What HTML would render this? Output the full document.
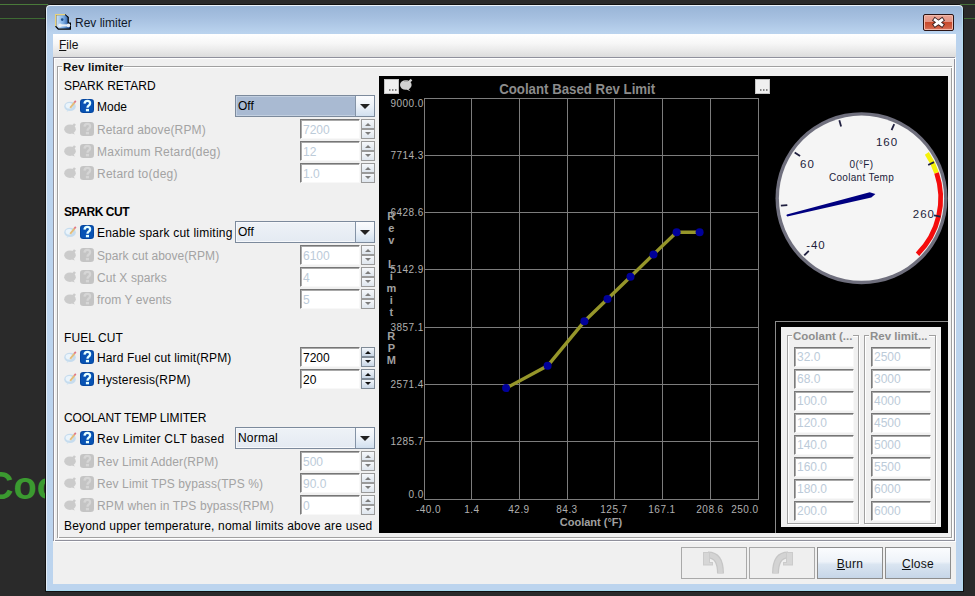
<!DOCTYPE html>
<html><head><meta charset="utf-8">
<style>
*{box-sizing:border-box;margin:0;padding:0}
html,body{width:975px;height:596px;overflow:hidden;background:#2a2a2a;font-family:"Liberation Sans",sans-serif;font-size:12px;color:#000}
.a{position:absolute}
.t{position:absolute;white-space:nowrap;line-height:14px}
.dis{color:#a3a3a3}
.tf{position:absolute;background:#fff;border-top:1px solid #767676;border-left:1px solid #7c7c7c;border-right:1px solid #f8f8f8;border-bottom:1px solid #f8f8f8;box-shadow:inset 1px 1px 0 #a9a9a9;font-size:12px;line-height:16px;padding-left:2px;padding-top:2px;color:#000;white-space:nowrap;overflow:hidden}
.tf.d{color:#bccbd9}
.sb{position:absolute;width:14px;height:10px;border:1px solid #9a9a9a;background:linear-gradient(#f6f8fb,#dfe6ee)}
.sb.e{border-color:#7f8a96;background:linear-gradient(#f2f6fb,#c9d7e7)}
.sb i{position:absolute;left:3px;width:0;height:0;border-left:3px solid transparent;border-right:3px solid transparent}
.sb i.up{top:3px;border-bottom:3px solid #7c7c7c}
.sb i.dn{top:2px;border-top:3px solid #7c7c7c}
.sb.e i.up{border-bottom-color:#111}
.sb.e i.dn{border-top-color:#111}
.combo{position:absolute;border:1px solid #7c8a9c;background:linear-gradient(#eef2f7,#e4eaf2);height:22px;width:140px;box-shadow:inset 0 0 0 1px #f6f8fb}
.combo.f{background:#a9bad2;box-shadow:inset 0 0 0 1px #c2cfe0}
.combo .v{position:absolute;left:2px;top:3px;line-height:14px}
.combo .btn{position:absolute;right:0;top:0;width:19px;height:20px;border-left:1px solid #8493a6;background:linear-gradient(#fbfcfe,#eef3f9 45%,#d2e0ef)}
.combo .btn i{position:absolute;left:4px;top:8px;width:0;height:0;border-left:5px solid transparent;border-right:5px solid transparent;border-top:5px solid #222}
.etch{border:1px solid #a0a0a0;box-shadow:1px 1px 0 #fff, inset 1px 1px 0 #fff}
.gtitle{font-weight:bold;font-size:11.5px;color:#8e8e8e;background:#f0f0f0;padding:0 1px}
.btnw{position:absolute;width:66px;height:32px;border:1px solid #8d8d8d;background:linear-gradient(#fbfcfe 0,#eef3f9 45%,#dae5f1 55%,#c6d6e8 100%);text-align:center;line-height:32px;font-size:12px;color:#111;letter-spacing:0.3px}
.btnw.d{background:#efefef;border-color:#a9a9a9}
svg text{font-family:"Liberation Sans",sans-serif}
.ax{font-size:10px;fill:#b0b0b0;letter-spacing:0.45px}
.ttl{font-size:14px;font-weight:bold;fill:#8c8c8c}
.xt{font-size:11px;font-weight:bold;fill:#a0a0a0}
.yt{font-size:11px;font-weight:bold;fill:#a0a0a0}
.gl{font-size:11.5px;fill:#1c1c3a;letter-spacing:0.9px}
.gt{font-size:10px;fill:#1c1c3a;letter-spacing:0.3px}
</style></head>
<body>
<!-- background decorations -->
<div class="a" style="left:0;top:4px;width:48px;height:1px;background:#4a7a3a"></div>
<div class="a" style="left:0;top:18px;width:46px;height:1px;background:#3e6a33"></div>
<div class="a" style="left:960px;top:4px;width:15px;height:1px;background:#44703a"></div>
<div class="a" style="left:963px;top:18px;width:12px;height:1px;background:#3e6a33"></div>
<div class="t" style="left:-14px;top:464px;font-size:38px;line-height:44px;font-weight:bold;color:#3b9a30">Coo</div>

<!-- window -->
<div class="a" style="left:45px;top:4px;width:919px;height:588px;background:#111;border-radius:7px 7px 0 0"></div>
<div class="a" style="left:46px;top:5px;width:917px;height:586px;border-radius:4px 4px 0 0;background:linear-gradient(#f4f8fc 0,#e4edf7 1px,#e4edf7 100%)"></div>
<div class="a" style="left:47px;top:6px;width:915px;height:584px;border-radius:3px 3px 0 0;background:linear-gradient(#99b5d7 0,#a6c0e0 12px,#bad3ee 27px,#bcd4ee 100%)"></div>

<div class="a" style="left:962px;top:8px;width:1px;height:583px;background:#b4dcef"></div>
<div class="a" style="left:46px;top:590px;width:917px;height:1px;background:#a9dbef"></div>
<!-- title -->
<div class="a" style="left:55px;top:14px;width:17px;height:17px">
<svg width="17" height="17"><defs><linearGradient id="ib" x1="0" y1="0" x2="1" y2="0"><stop offset="0" stop-color="#cfe4f8"/><stop offset="0.5" stop-color="#7fb0e6"/><stop offset="1" stop-color="#1d4f9a"/></linearGradient></defs>
<path d="M10 0 L13.8 3 L13.8 8.6 L16 8.6 L16 15.8 L3 15.8 L0 12.6 L1 1 Z" fill="#000"/>
<path d="M1.3 1.3 L10 1 L12.6 3.6 L12.6 9.6 L14.8 9.6 L14.8 14.4 L3.6 14.4 L1.3 12 Z" fill="url(#ib)"/>
<path d="M0.6 12.2 V0.6 H10" fill="none" stroke="#e8d27a" stroke-width="1.2"/>
<circle cx="7.2" cy="5.6" r="1.3" fill="#1e4f8c"/>
<path d="M5 11.4 H13.5" stroke="#e8eef4" stroke-width="2.2"/><circle cx="5" cy="11.4" r="1.8" fill="#e8eef4"/><circle cx="13.5" cy="11.4" r="1.8" fill="#e8eef4"/>
</svg>
</div>
<div class="t" style="left:75px;top:16px;font-size:12px;color:#101828">Rev limiter</div>
<!-- close button -->
<div class="a" style="left:923px;top:14px;width:31px;height:17px;border:1px solid #2c1414;border-radius:2px;box-shadow:inset 0 0 0 1px #f2b9aa;background:linear-gradient(#eba595 0,#e39383 46%,#c84a2c 50%,#cf5c40 80%,#dc7a66 100%)"></div>
<svg class="a" style="left:930px;top:16px" width="17" height="13"><path d="M5.2 4 L11.8 8.8 M11.8 4 L5.2 8.8" stroke="#3a2020" stroke-width="4.6" stroke-linecap="square"/><path d="M5.2 4 L11.8 8.8 M11.8 4 L5.2 8.8" stroke="#fff" stroke-width="2.8" stroke-linecap="square"/></svg>

<!-- client -->
<div class="a" style="left:53px;top:34px;width:903px;height:550px;background:#f0f0f0"></div>
<!-- menubar -->
<div class="a" style="left:53px;top:34px;width:903px;height:23px;background:linear-gradient(#ffffff,#f7f7f7 40%,#e8e8e8 75%,#dcdcdc)"></div>
<div class="t" style="left:59px;top:38px;color:#111"><u>F</u>ile</div>

<!-- outer panel etched -->
<div class="a" style="left:53px;top:57px;width:902px;height:484px;border:1px solid #8f909c"></div>
<div class="a" style="left:54px;top:58px;width:902px;height:484px;border:1px solid #fff;border-left-color:#fff"></div>
<!-- groupbox etched -->
<div class="a" style="left:57px;top:66px;width:895px;height:472px;border:1px solid #a0a0a0"></div>
<div class="a" style="left:58px;top:67px;width:895px;height:472px;border:1px solid #fff"></div>
<div class="t" style="left:62px;top:60px;font-weight:bold;font-size:11.5px;background:#f0f0f0;padding:0 1px;color:#111;letter-spacing:0.15px">Rev limiter</div>

<div class="t" style="left:64px;top:79px">SPARK RETARD</div>
<div class="a" style="left:64px;top:100px;width:13px;height:12px"><svg width="13" height="12"><ellipse cx="6" cy="6.4" rx="5.8" ry="4.7" fill="#c6dcee"/><ellipse cx="5.2" cy="5.8" rx="3.6" ry="2.8" fill="#eaf4fb"/><path d="M3.5 10 L2.6 11.8 L6 10.6Z" fill="#cfe2f0"/><path d="M6.2 7.8 L10.6 2.4" stroke="#e4bc78" stroke-width="1.9"/><path d="M10.3 2.6 L11.8 0.9" stroke="#e07886" stroke-width="1.7"/></svg></div>
<div class="a" style="left:80px;top:99px;width:14px;height:14px"><svg width="14" height="14"><rect width="14" height="14" rx="3.2" fill="#04469f"/><rect x="1" y="1" width="12" height="12" rx="2.5" fill="#0853b4"/><path d="M4.5 4.7 Q4.7 1.9 7.4 1.9 Q10.1 1.9 10.1 4.3 Q10.1 5.8 8.5 6.8 Q7.5 7.4 7.5 8.8" fill="none" stroke="#e6ffff" stroke-width="2.3"/><rect x="5.9" y="9.9" width="3.1" height="2.4" fill="#e6ffff"/></svg></div>
<div class="t" style="left:97px;top:100px">Mode</div>
<div class="combo f" style="left:235px;top:95px"><div class="v">Off</div><div class="btn"><i></i></div></div>
<div class="a" style="left:64px;top:123px;width:13px;height:12px"><svg width="13" height="12"><ellipse cx="6" cy="6.2" rx="5.8" ry="4.8" fill="#cbcbcb"/><path d="M8 4.5 L11 1" stroke="#cbcbcb" stroke-width="2.6"/><path d="M9 9 L11 11.5 L8 10.5Z" fill="#cbcbcb"/></svg></div>
<div class="a" style="left:80px;top:122px;width:14px;height:14px"><svg width="14" height="14"><rect width="14" height="14" rx="3.2" fill="#c4c4c4"/><path d="M4.5 4.7 Q4.7 1.9 7.4 1.9 Q10.1 1.9 10.1 4.3 Q10.1 5.8 8.5 6.8 Q7.5 7.4 7.5 8.8" fill="none" stroke="#d6d6d6" stroke-width="2.3"/><rect x="5.9" y="9.9" width="3.1" height="2.4" fill="#d6d6d6"/></svg></div>
<div class="t dis" style="left:97px;top:123px;letter-spacing:0.12px">Retard above(RPM)</div>
<div class="tf d" style="left:300px;top:119px;width:60px;height:20px">7200</div>
<div class="sb" style="left:361px;top:119px"><i class="up"></i></div>
<div class="sb" style="left:361px;top:129px"><i class="dn"></i></div>
<div class="a" style="left:64px;top:145px;width:13px;height:12px"><svg width="13" height="12"><ellipse cx="6" cy="6.2" rx="5.8" ry="4.8" fill="#cbcbcb"/><path d="M8 4.5 L11 1" stroke="#cbcbcb" stroke-width="2.6"/><path d="M9 9 L11 11.5 L8 10.5Z" fill="#cbcbcb"/></svg></div>
<div class="a" style="left:80px;top:144px;width:14px;height:14px"><svg width="14" height="14"><rect width="14" height="14" rx="3.2" fill="#c4c4c4"/><path d="M4.5 4.7 Q4.7 1.9 7.4 1.9 Q10.1 1.9 10.1 4.3 Q10.1 5.8 8.5 6.8 Q7.5 7.4 7.5 8.8" fill="none" stroke="#d6d6d6" stroke-width="2.3"/><rect x="5.9" y="9.9" width="3.1" height="2.4" fill="#d6d6d6"/></svg></div>
<div class="t dis" style="left:97px;top:145px;letter-spacing:0.23px">Maximum Retard(deg)</div>
<div class="tf d" style="left:300px;top:141px;width:60px;height:20px">12</div>
<div class="sb" style="left:361px;top:141px"><i class="up"></i></div>
<div class="sb" style="left:361px;top:151px"><i class="dn"></i></div>
<div class="a" style="left:64px;top:167px;width:13px;height:12px"><svg width="13" height="12"><ellipse cx="6" cy="6.2" rx="5.8" ry="4.8" fill="#cbcbcb"/><path d="M8 4.5 L11 1" stroke="#cbcbcb" stroke-width="2.6"/><path d="M9 9 L11 11.5 L8 10.5Z" fill="#cbcbcb"/></svg></div>
<div class="a" style="left:80px;top:166px;width:14px;height:14px"><svg width="14" height="14"><rect width="14" height="14" rx="3.2" fill="#c4c4c4"/><path d="M4.5 4.7 Q4.7 1.9 7.4 1.9 Q10.1 1.9 10.1 4.3 Q10.1 5.8 8.5 6.8 Q7.5 7.4 7.5 8.8" fill="none" stroke="#d6d6d6" stroke-width="2.3"/><rect x="5.9" y="9.9" width="3.1" height="2.4" fill="#d6d6d6"/></svg></div>
<div class="t dis" style="left:97px;top:167px;letter-spacing:0.24px">Retard to(deg)</div>
<div class="tf d" style="left:300px;top:163px;width:60px;height:20px">1.0</div>
<div class="sb" style="left:361px;top:163px"><i class="up"></i></div>
<div class="sb" style="left:361px;top:173px"><i class="dn"></i></div>
<div class="t" style="left:64px;top:205px;font-weight:bold;letter-spacing:-0.45px">SPARK CUT</div>
<div class="a" style="left:64px;top:226px;width:13px;height:12px"><svg width="13" height="12"><ellipse cx="6" cy="6.4" rx="5.8" ry="4.7" fill="#c6dcee"/><ellipse cx="5.2" cy="5.8" rx="3.6" ry="2.8" fill="#eaf4fb"/><path d="M3.5 10 L2.6 11.8 L6 10.6Z" fill="#cfe2f0"/><path d="M6.2 7.8 L10.6 2.4" stroke="#e4bc78" stroke-width="1.9"/><path d="M10.3 2.6 L11.8 0.9" stroke="#e07886" stroke-width="1.7"/></svg></div>
<div class="a" style="left:80px;top:225px;width:14px;height:14px"><svg width="14" height="14"><rect width="14" height="14" rx="3.2" fill="#04469f"/><rect x="1" y="1" width="12" height="12" rx="2.5" fill="#0853b4"/><path d="M4.5 4.7 Q4.7 1.9 7.4 1.9 Q10.1 1.9 10.1 4.3 Q10.1 5.8 8.5 6.8 Q7.5 7.4 7.5 8.8" fill="none" stroke="#e6ffff" stroke-width="2.3"/><rect x="5.9" y="9.9" width="3.1" height="2.4" fill="#e6ffff"/></svg></div>
<div class="t" style="left:97px;top:226px;letter-spacing:0.22px">Enable spark cut limiting</div>
<div class="combo" style="left:235px;top:221px"><div class="v">Off</div><div class="btn"><i></i></div></div>
<div class="a" style="left:64px;top:249px;width:13px;height:12px"><svg width="13" height="12"><ellipse cx="6" cy="6.2" rx="5.8" ry="4.8" fill="#cbcbcb"/><path d="M8 4.5 L11 1" stroke="#cbcbcb" stroke-width="2.6"/><path d="M9 9 L11 11.5 L8 10.5Z" fill="#cbcbcb"/></svg></div>
<div class="a" style="left:80px;top:248px;width:14px;height:14px"><svg width="14" height="14"><rect width="14" height="14" rx="3.2" fill="#c4c4c4"/><path d="M4.5 4.7 Q4.7 1.9 7.4 1.9 Q10.1 1.9 10.1 4.3 Q10.1 5.8 8.5 6.8 Q7.5 7.4 7.5 8.8" fill="none" stroke="#d6d6d6" stroke-width="2.3"/><rect x="5.9" y="9.9" width="3.1" height="2.4" fill="#d6d6d6"/></svg></div>
<div class="t dis" style="left:97px;top:249px;letter-spacing:0.04px">Spark cut above(RPM)</div>
<div class="tf d" style="left:300px;top:245px;width:60px;height:20px">6100</div>
<div class="sb" style="left:361px;top:245px"><i class="up"></i></div>
<div class="sb" style="left:361px;top:255px"><i class="dn"></i></div>
<div class="a" style="left:64px;top:271px;width:13px;height:12px"><svg width="13" height="12"><ellipse cx="6" cy="6.2" rx="5.8" ry="4.8" fill="#cbcbcb"/><path d="M8 4.5 L11 1" stroke="#cbcbcb" stroke-width="2.6"/><path d="M9 9 L11 11.5 L8 10.5Z" fill="#cbcbcb"/></svg></div>
<div class="a" style="left:80px;top:270px;width:14px;height:14px"><svg width="14" height="14"><rect width="14" height="14" rx="3.2" fill="#c4c4c4"/><path d="M4.5 4.7 Q4.7 1.9 7.4 1.9 Q10.1 1.9 10.1 4.3 Q10.1 5.8 8.5 6.8 Q7.5 7.4 7.5 8.8" fill="none" stroke="#d6d6d6" stroke-width="2.3"/><rect x="5.9" y="9.9" width="3.1" height="2.4" fill="#d6d6d6"/></svg></div>
<div class="t dis" style="left:97px;top:271px;letter-spacing:0.09px">Cut X sparks</div>
<div class="tf d" style="left:300px;top:267px;width:60px;height:20px">4</div>
<div class="sb" style="left:361px;top:267px"><i class="up"></i></div>
<div class="sb" style="left:361px;top:277px"><i class="dn"></i></div>
<div class="a" style="left:64px;top:293px;width:13px;height:12px"><svg width="13" height="12"><ellipse cx="6" cy="6.2" rx="5.8" ry="4.8" fill="#cbcbcb"/><path d="M8 4.5 L11 1" stroke="#cbcbcb" stroke-width="2.6"/><path d="M9 9 L11 11.5 L8 10.5Z" fill="#cbcbcb"/></svg></div>
<div class="a" style="left:80px;top:292px;width:14px;height:14px"><svg width="14" height="14"><rect width="14" height="14" rx="3.2" fill="#c4c4c4"/><path d="M4.5 4.7 Q4.7 1.9 7.4 1.9 Q10.1 1.9 10.1 4.3 Q10.1 5.8 8.5 6.8 Q7.5 7.4 7.5 8.8" fill="none" stroke="#d6d6d6" stroke-width="2.3"/><rect x="5.9" y="9.9" width="3.1" height="2.4" fill="#d6d6d6"/></svg></div>
<div class="t dis" style="left:97px;top:293px;letter-spacing:0.08px">from Y events</div>
<div class="tf d" style="left:300px;top:289px;width:60px;height:20px">5</div>
<div class="sb" style="left:361px;top:289px"><i class="up"></i></div>
<div class="sb" style="left:361px;top:299px"><i class="dn"></i></div>
<div class="t" style="left:64px;top:331px;letter-spacing:0.09px">FUEL CUT</div>
<div class="a" style="left:64px;top:351px;width:13px;height:12px"><svg width="13" height="12"><ellipse cx="6" cy="6.4" rx="5.8" ry="4.7" fill="#c6dcee"/><ellipse cx="5.2" cy="5.8" rx="3.6" ry="2.8" fill="#eaf4fb"/><path d="M3.5 10 L2.6 11.8 L6 10.6Z" fill="#cfe2f0"/><path d="M6.2 7.8 L10.6 2.4" stroke="#e4bc78" stroke-width="1.9"/><path d="M10.3 2.6 L11.8 0.9" stroke="#e07886" stroke-width="1.7"/></svg></div>
<div class="a" style="left:80px;top:350px;width:14px;height:14px"><svg width="14" height="14"><rect width="14" height="14" rx="3.2" fill="#04469f"/><rect x="1" y="1" width="12" height="12" rx="2.5" fill="#0853b4"/><path d="M4.5 4.7 Q4.7 1.9 7.4 1.9 Q10.1 1.9 10.1 4.3 Q10.1 5.8 8.5 6.8 Q7.5 7.4 7.5 8.8" fill="none" stroke="#e6ffff" stroke-width="2.3"/><rect x="5.9" y="9.9" width="3.1" height="2.4" fill="#e6ffff"/></svg></div>
<div class="t" style="left:97px;top:351px;letter-spacing:0.13px">Hard Fuel cut limit(RPM)</div>
<div class="tf" style="left:300px;top:347px;width:60px;height:20px">7200</div>
<div class="sb e" style="left:361px;top:347px"><i class="up"></i></div>
<div class="sb e" style="left:361px;top:357px"><i class="dn"></i></div>
<div class="a" style="left:64px;top:373px;width:13px;height:12px"><svg width="13" height="12"><ellipse cx="6" cy="6.4" rx="5.8" ry="4.7" fill="#c6dcee"/><ellipse cx="5.2" cy="5.8" rx="3.6" ry="2.8" fill="#eaf4fb"/><path d="M3.5 10 L2.6 11.8 L6 10.6Z" fill="#cfe2f0"/><path d="M6.2 7.8 L10.6 2.4" stroke="#e4bc78" stroke-width="1.9"/><path d="M10.3 2.6 L11.8 0.9" stroke="#e07886" stroke-width="1.7"/></svg></div>
<div class="a" style="left:80px;top:372px;width:14px;height:14px"><svg width="14" height="14"><rect width="14" height="14" rx="3.2" fill="#04469f"/><rect x="1" y="1" width="12" height="12" rx="2.5" fill="#0853b4"/><path d="M4.5 4.7 Q4.7 1.9 7.4 1.9 Q10.1 1.9 10.1 4.3 Q10.1 5.8 8.5 6.8 Q7.5 7.4 7.5 8.8" fill="none" stroke="#e6ffff" stroke-width="2.3"/><rect x="5.9" y="9.9" width="3.1" height="2.4" fill="#e6ffff"/></svg></div>
<div class="t" style="left:97px;top:373px;letter-spacing:0.21px">Hysteresis(RPM)</div>
<div class="tf" style="left:300px;top:369px;width:60px;height:20px">20</div>
<div class="sb e" style="left:361px;top:369px"><i class="up"></i></div>
<div class="sb e" style="left:361px;top:379px"><i class="dn"></i></div>
<div class="t" style="left:64px;top:411px;letter-spacing:-0.12px">COOLANT TEMP LIMITER</div>
<div class="a" style="left:64px;top:432px;width:13px;height:12px"><svg width="13" height="12"><ellipse cx="6" cy="6.4" rx="5.8" ry="4.7" fill="#c6dcee"/><ellipse cx="5.2" cy="5.8" rx="3.6" ry="2.8" fill="#eaf4fb"/><path d="M3.5 10 L2.6 11.8 L6 10.6Z" fill="#cfe2f0"/><path d="M6.2 7.8 L10.6 2.4" stroke="#e4bc78" stroke-width="1.9"/><path d="M10.3 2.6 L11.8 0.9" stroke="#e07886" stroke-width="1.7"/></svg></div>
<div class="a" style="left:80px;top:431px;width:14px;height:14px"><svg width="14" height="14"><rect width="14" height="14" rx="3.2" fill="#04469f"/><rect x="1" y="1" width="12" height="12" rx="2.5" fill="#0853b4"/><path d="M4.5 4.7 Q4.7 1.9 7.4 1.9 Q10.1 1.9 10.1 4.3 Q10.1 5.8 8.5 6.8 Q7.5 7.4 7.5 8.8" fill="none" stroke="#e6ffff" stroke-width="2.3"/><rect x="5.9" y="9.9" width="3.1" height="2.4" fill="#e6ffff"/></svg></div>
<div class="t" style="left:97px;top:432px;letter-spacing:0.28px">Rev Limiter CLT based</div>
<div class="combo" style="left:235px;top:427px"><div class="v" style="letter-spacing:0.2px">Normal</div><div class="btn"><i></i></div></div>
<div class="a" style="left:64px;top:455px;width:13px;height:12px"><svg width="13" height="12"><ellipse cx="6" cy="6.2" rx="5.8" ry="4.8" fill="#cbcbcb"/><path d="M8 4.5 L11 1" stroke="#cbcbcb" stroke-width="2.6"/><path d="M9 9 L11 11.5 L8 10.5Z" fill="#cbcbcb"/></svg></div>
<div class="a" style="left:80px;top:454px;width:14px;height:14px"><svg width="14" height="14"><rect width="14" height="14" rx="3.2" fill="#c4c4c4"/><path d="M4.5 4.7 Q4.7 1.9 7.4 1.9 Q10.1 1.9 10.1 4.3 Q10.1 5.8 8.5 6.8 Q7.5 7.4 7.5 8.8" fill="none" stroke="#d6d6d6" stroke-width="2.3"/><rect x="5.9" y="9.9" width="3.1" height="2.4" fill="#d6d6d6"/></svg></div>
<div class="t dis" style="left:97px;top:455px;letter-spacing:0.1px">Rev Limit Adder(RPM)</div>
<div class="tf d" style="left:300px;top:451px;width:60px;height:20px">500</div>
<div class="sb" style="left:361px;top:451px"><i class="up"></i></div>
<div class="sb" style="left:361px;top:461px"><i class="dn"></i></div>
<div class="a" style="left:64px;top:477px;width:13px;height:12px"><svg width="13" height="12"><ellipse cx="6" cy="6.2" rx="5.8" ry="4.8" fill="#cbcbcb"/><path d="M8 4.5 L11 1" stroke="#cbcbcb" stroke-width="2.6"/><path d="M9 9 L11 11.5 L8 10.5Z" fill="#cbcbcb"/></svg></div>
<div class="a" style="left:80px;top:476px;width:14px;height:14px"><svg width="14" height="14"><rect width="14" height="14" rx="3.2" fill="#c4c4c4"/><path d="M4.5 4.7 Q4.7 1.9 7.4 1.9 Q10.1 1.9 10.1 4.3 Q10.1 5.8 8.5 6.8 Q7.5 7.4 7.5 8.8" fill="none" stroke="#d6d6d6" stroke-width="2.3"/><rect x="5.9" y="9.9" width="3.1" height="2.4" fill="#d6d6d6"/></svg></div>
<div class="t dis" style="left:97px;top:477px;letter-spacing:0.11px">Rev Limit TPS bypass(TPS %)</div>
<div class="tf d" style="left:300px;top:473px;width:60px;height:20px">90.0</div>
<div class="sb" style="left:361px;top:473px"><i class="up"></i></div>
<div class="sb" style="left:361px;top:483px"><i class="dn"></i></div>
<div class="a" style="left:64px;top:499px;width:13px;height:12px"><svg width="13" height="12"><ellipse cx="6" cy="6.2" rx="5.8" ry="4.8" fill="#cbcbcb"/><path d="M8 4.5 L11 1" stroke="#cbcbcb" stroke-width="2.6"/><path d="M9 9 L11 11.5 L8 10.5Z" fill="#cbcbcb"/></svg></div>
<div class="a" style="left:80px;top:498px;width:14px;height:14px"><svg width="14" height="14"><rect width="14" height="14" rx="3.2" fill="#c4c4c4"/><path d="M4.5 4.7 Q4.7 1.9 7.4 1.9 Q10.1 1.9 10.1 4.3 Q10.1 5.8 8.5 6.8 Q7.5 7.4 7.5 8.8" fill="none" stroke="#d6d6d6" stroke-width="2.3"/><rect x="5.9" y="9.9" width="3.1" height="2.4" fill="#d6d6d6"/></svg></div>
<div class="t dis" style="left:97px;top:499px;letter-spacing:0.11px">RPM when in TPS bypass(RPM)</div>
<div class="tf d" style="left:300px;top:495px;width:60px;height:20px">0</div>
<div class="sb" style="left:361px;top:495px"><i class="up"></i></div>
<div class="sb" style="left:361px;top:505px"><i class="dn"></i></div>
<div class="t" style="left:64px;top:519px;letter-spacing:0.18px">Beyond upper temperature, nomal limits above are used</div>

<svg class="a" style="left:379px;top:76px" width="569" height="457" viewBox="0 0 569 457">
<rect x="0" y="0" width="569" height="457" fill="#000"/>
<rect x="45" y="22" width="1" height="402" fill="#7c7c7c"/>
<rect x="92" y="22" width="1" height="402" fill="#7c7c7c"/>
<rect x="140" y="22" width="1" height="402" fill="#7c7c7c"/>
<rect x="188" y="22" width="1" height="402" fill="#7c7c7c"/>
<rect x="235" y="22" width="1" height="402" fill="#7c7c7c"/>
<rect x="283" y="22" width="1" height="402" fill="#7c7c7c"/>
<rect x="331" y="22" width="1" height="402" fill="#7c7c7c"/>
<rect x="379" y="22" width="1" height="402" fill="#7c7c7c"/>
<rect x="45" y="22" width="335" height="1" fill="#7c7c7c"/>
<rect x="45" y="79" width="335" height="1" fill="#7c7c7c"/>
<rect x="45" y="136" width="335" height="1" fill="#7c7c7c"/>
<rect x="45" y="193" width="335" height="1" fill="#7c7c7c"/>
<rect x="45" y="251" width="335" height="1" fill="#7c7c7c"/>
<rect x="45" y="308" width="335" height="1" fill="#7c7c7c"/>
<rect x="45" y="365" width="335" height="1" fill="#7c7c7c"/>
<rect x="45" y="423" width="335" height="1" fill="#7c7c7c"/>
<text x="44.80000000000001" y="31" class="ax" text-anchor="end">9000.0</text>
<text x="44.80000000000001" y="83" class="ax" text-anchor="end">7714.3</text>
<text x="44.80000000000001" y="140" class="ax" text-anchor="end">6428.6</text>
<text x="44.80000000000001" y="197" class="ax" text-anchor="end">5142.9</text>
<text x="44.80000000000001" y="255" class="ax" text-anchor="end">3857.1</text>
<text x="44.80000000000001" y="312" class="ax" text-anchor="end">2571.4</text>
<text x="44.80000000000001" y="369" class="ax" text-anchor="end">1285.7</text>
<text x="44.80000000000001" y="422" class="ax" text-anchor="end">0.0</text>
<text x="49.5" y="437" class="ax" text-anchor="middle">-40.0</text>
<text x="92.80000000000001" y="437" class="ax" text-anchor="middle">1.4</text>
<text x="140" y="437" class="ax" text-anchor="middle">42.9</text>
<text x="188" y="437" class="ax" text-anchor="middle">84.3</text>
<text x="235" y="437" class="ax" text-anchor="middle">125.7</text>
<text x="283" y="437" class="ax" text-anchor="middle">167.1</text>
<text x="331" y="437" class="ax" text-anchor="middle">208.6</text>
<text x="365.79999999999995" y="437" class="ax" text-anchor="middle">250.0</text>
<text x="120.19999999999999" y="18" class="ttl" textLength="156" lengthAdjust="spacingAndGlyphs">Coolant Based Rev Limit</text>
<text x="212" y="450" class="xt" text-anchor="middle">Coolant (&#176;F)</text>
<text x="12.300000000000011" y="144" class="yt" text-anchor="middle">R</text>
<text x="12.300000000000011" y="156" class="yt" text-anchor="middle">e</text>
<text x="12.300000000000011" y="168" class="yt" text-anchor="middle">v</text>
<text x="12.300000000000011" y="192" class="yt" text-anchor="middle">L</text>
<text x="12.300000000000011" y="204" class="yt" text-anchor="middle">i</text>
<text x="12.300000000000011" y="216" class="yt" text-anchor="middle">m</text>
<text x="12.300000000000011" y="228" class="yt" text-anchor="middle">i</text>
<text x="12.300000000000011" y="240" class="yt" text-anchor="middle">t</text>
<text x="12.300000000000011" y="264" class="yt" text-anchor="middle">R</text>
<text x="12.300000000000011" y="276" class="yt" text-anchor="middle">P</text>
<text x="12.300000000000011" y="288" class="yt" text-anchor="middle">M</text>
<polyline fill="none" stroke="#96962a" stroke-width="3.4" stroke-linejoin="round" points="127.1,312.1 168.6,289.8 205.4,245.3 228.5,223.0 251.5,200.7 274.5,178.4 297.6,156.2 320.6,156.2"/>
<circle cx="127.1" cy="312.1" r="4" fill="#00009a"/>
<circle cx="168.6" cy="289.8" r="4" fill="#00009a"/>
<circle cx="205.4" cy="245.3" r="4" fill="#00009a"/>
<circle cx="228.5" cy="223.0" r="4" fill="#00009a"/>
<circle cx="251.5" cy="200.7" r="4" fill="#00009a"/>
<circle cx="274.5" cy="178.4" r="4" fill="#00009a"/>
<circle cx="297.6" cy="156.2" r="4" fill="#00009a"/>
<circle cx="320.6" cy="156.2" r="4" fill="#00009a"/>
<rect x="5.5" y="3.5" width="14" height="14" fill="#f0f0f0" stroke="#c4c4c4"/>
<rect x="10" y="13" width="1.5" height="2" fill="#858585"/><rect x="13" y="13" width="1.5" height="2" fill="#858585"/><rect x="16" y="13" width="1.5" height="2" fill="#858585"/>
<rect x="376.5" y="3.5" width="14" height="14" fill="#f0f0f0" stroke="#c4c4c4"/>
<rect x="381" y="13" width="1.5" height="2" fill="#858585"/><rect x="384" y="13" width="1.5" height="2" fill="#858585"/><rect x="387" y="13" width="1.5" height="2" fill="#858585"/>
<g transform="translate(21,3)"><ellipse cx="5.8" cy="6" rx="5.8" ry="4.8" fill="#d0d0d0"/><path d="M8 9.5 L10.4 12.2 L6.5 10.5Z" fill="#d0d0d0"/><path d="M8.5 3.5 L11.5 0.6" stroke="#d0d0d0" stroke-width="2.4"/><path d="M4 2 h4" stroke="#909090" stroke-width="1"/></g>
<defs><linearGradient id="rim" x1="0" y1="0" x2="0" y2="1"><stop offset="0" stop-color="#7a7a88"/><stop offset="1" stop-color="#6a6a78"/></linearGradient></defs>
<circle cx="482.5" cy="122.19999999999999" r="86" fill="#6f6f7d"/>
<circle cx="482.5" cy="122.19999999999999" r="82.6" fill="#f5f5f5"/>
<path d="M547.84,77.44 A79.2,79.2 0 0 1 557.59,97.03" fill="none" stroke="#f6f20a" stroke-width="4.8"/>
<path d="M557.59,97.03 A79.2,79.2 0 0 1 538.50,178.20" fill="none" stroke="#f40c0c" stroke-width="4.8"/>
<line x1="429.82" y1="174.88" x2="425.22" y2="179.48" stroke="#202040" stroke-width="1.8"/>
<line x1="408.32" y1="129.07" x2="401.85" y2="129.67" stroke="#202040" stroke-width="1.8"/>
<line x1="421.04" y1="80.10" x2="415.68" y2="76.42" stroke="#202040" stroke-width="1.8"/>
<line x1="462.11" y1="50.54" x2="460.33" y2="44.29" stroke="#202040" stroke-width="1.8"/>
<line x1="512.59" y1="54.05" x2="515.22" y2="48.10" stroke="#202040" stroke-width="1.8"/>
<line x1="549.19" y1="88.99" x2="555.01" y2="86.10" stroke="#202040" stroke-width="1.8"/>
<line x1="555.02" y1="139.26" x2="561.35" y2="140.74" stroke="#202040" stroke-width="1.8"/>
<text x="437" y="173" class="gl" text-anchor="middle">-40</text>
<text x="428.4" y="92" class="gl" text-anchor="middle">60</text>
<text x="508" y="70" class="gl" text-anchor="middle">160</text>
<text x="544.8" y="142" class="gl" text-anchor="middle">260</text>
<text x="482.5" y="92" class="gt" text-anchor="middle">0(&#176;F)</text>
<text x="482.5" y="105" class="gt" text-anchor="middle">Coolant Temp</text>
<polygon points="407.4,139.6 407.79999999999995,138.5 490.70000000000005,116.30000000000001 496.4,118.1 492.29999999999995,121.6 408.29999999999995,140.5" fill="#000080"/>
<rect x="396" y="245" width="173" height="1" fill="#8c8c8c"/>
<rect x="396" y="245" width="1" height="212" fill="#8c8c8c"/>
<rect x="402" y="251" width="160" height="200" fill="#f0f0f0"/>
</svg>

<div class="a etch" style="left:787px;top:335px;width:72px;height:189px"></div>
<div class="t gtitle" style="left:792px;top:329px">Coolant (...</div>
<div class="tf d" style="left:794px;top:347px;width:60px;height:20px;padding-top:1px">32.0</div>
<div class="tf d" style="left:794px;top:369px;width:60px;height:20px;padding-top:1px">68.0</div>
<div class="tf d" style="left:794px;top:391px;width:60px;height:20px;padding-top:1px">100.0</div>
<div class="tf d" style="left:794px;top:413px;width:60px;height:20px;padding-top:1px">120.0</div>
<div class="tf d" style="left:794px;top:435px;width:60px;height:20px;padding-top:1px">140.0</div>
<div class="tf d" style="left:794px;top:457px;width:60px;height:20px;padding-top:1px">160.0</div>
<div class="tf d" style="left:794px;top:479px;width:60px;height:20px;padding-top:1px">180.0</div>
<div class="tf d" style="left:794px;top:501px;width:60px;height:20px;padding-top:1px">200.0</div>
<div class="a etch" style="left:864px;top:335px;width:72px;height:189px"></div>
<div class="t gtitle" style="left:869px;top:329px">Rev limit...</div>
<div class="tf d" style="left:871px;top:347px;width:60px;height:20px;padding-top:1px">2500</div>
<div class="tf d" style="left:871px;top:369px;width:60px;height:20px;padding-top:1px">3000</div>
<div class="tf d" style="left:871px;top:391px;width:60px;height:20px;padding-top:1px">4000</div>
<div class="tf d" style="left:871px;top:413px;width:60px;height:20px;padding-top:1px">4500</div>
<div class="tf d" style="left:871px;top:435px;width:60px;height:20px;padding-top:1px">5000</div>
<div class="tf d" style="left:871px;top:457px;width:60px;height:20px;padding-top:1px">5500</div>
<div class="tf d" style="left:871px;top:479px;width:60px;height:20px;padding-top:1px">6000</div>
<div class="tf d" style="left:871px;top:501px;width:60px;height:20px;padding-top:1px">6000</div>

<!-- bottom buttons -->
<div class="btnw d" style="left:681px;top:547px"><svg class="a" style="left:0;top:0" width="64" height="30"><path d="M26 7 Q38.5 7 38.5 25.5" fill="none" stroke="#c6c6c6" stroke-width="7"/><path d="M26 7 Q38.5 7 38.5 25.5" fill="none" stroke="#d3d3d3" stroke-width="4.5"/><path d="M21 4 H28 V14 H31 V17.5 H21 Z" fill="#cbcbcb"/><path d="M22 5 H27 V15 H30 V16.5 H22 Z" fill="#d6d6d6"/></svg></div>
<div class="btnw d" style="left:749px;top:547px"><svg class="a" style="left:0;top:0" width="64" height="30"><g transform="translate(64,0) scale(-1,1)"><path d="M26 7 Q38.5 7 38.5 25.5" fill="none" stroke="#c6c6c6" stroke-width="7"/><path d="M26 7 Q38.5 7 38.5 25.5" fill="none" stroke="#d3d3d3" stroke-width="4.5"/><path d="M21 4 H28 V14 H31 V17.5 H21 Z" fill="#cbcbcb"/><path d="M22 5 H27 V15 H30 V16.5 H22 Z" fill="#d6d6d6"/></g></svg></div>
<div class="btnw" style="left:817px;top:547px"><u>B</u>urn</div>
<div class="btnw" style="left:885px;top:547px"><u>C</u>lose</div>

</body></html>
